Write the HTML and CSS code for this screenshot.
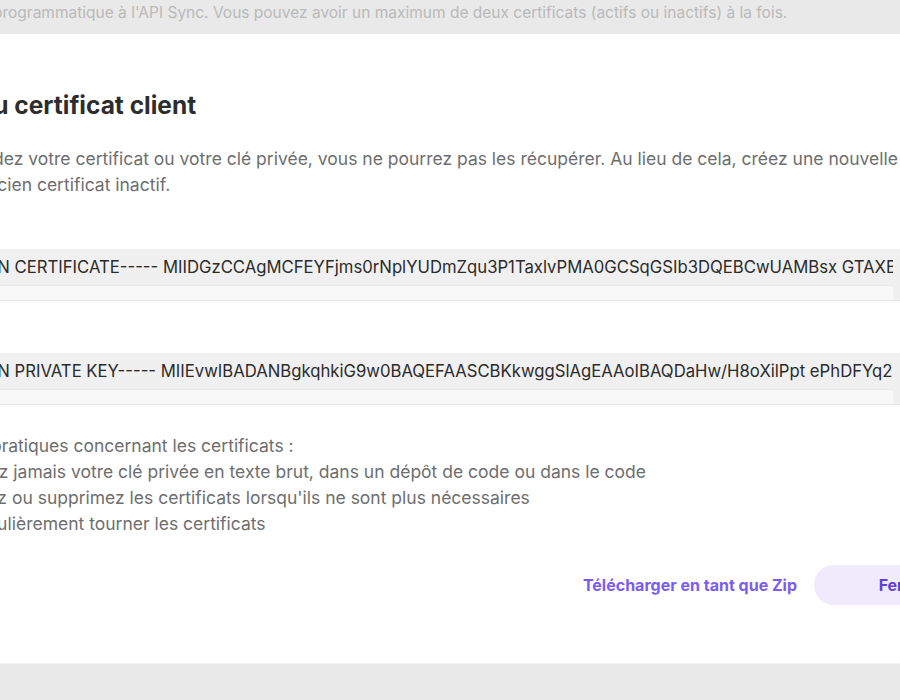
FILE: index.html
```html
<!DOCTYPE html>
<html lang="fr">
<head>
	<meta charset="utf-8">
	<title>Certificats clients</title>
	<link rel="stylesheet" href="styles.css">
</head>
<body>
	<div class="page-intro">
		<p>Les certificats clients permettent un accès programmatique à l'API Sync. Vous pouvez avoir un maximum de deux certificats (actifs ou inactifs) à la fois.</p>
	</div>

	<div class="modal">
		<div class="modal-body">
			<h2 class="modal-title">Nouveau certificat client</h2>
			<p class="notice">Si vous perdez votre certificat ou votre clé privée, vous ne pourrez pas les récupérer. Au lieu de cela, créez une nouvelle paire et<br>effacez l'ancien certificat inactif.</p>

			<div class="field-group">
				<label class="field-label">Certificat</label>
				<div class="cert-field">
					<div class="cert-text">-----BEGIN CERTIFICATE----- MIIDGzCCAgMCFEYFjms0rNplYUDmZqu3P1TaxlvPMA0GCSqGSIb3DQEBCwUAMBsx GTAXBgNVBAMMEHN5bmMtY2xpZW50LWNlcnQwHhcN</div>
					<div class="h-track"></div>
				</div>
			</div>

			<div class="field-group">
				<label class="field-label">Clé privée</label>
				<div class="cert-field">
					<div class="cert-text">-----BEGIN PRIVATE KEY----- MIIEvwIBADANBgkqhkiG9w0BAQEFAASCBKkwggSlAgEAAoIBAQDaHw/H8oXilPpt ePhDFYq2nGk8</div>
					<div class="h-track"></div>
				</div>
			</div>

			<div class="tips">
				<p>Meilleures pratiques concernant les certificats :</p>
				<ul>
					<li>Ne stockez jamais votre clé privée en texte brut, dans un dépôt de code ou dans le code</li>
					<li>Désactivez ou supprimez les certificats lorsqu'ils ne sont plus nécessaires</li>
					<li>Faites régulièrement tourner les certificats</li>
				</ul>
			</div>
		</div>

		<div class="modal-footer">
			<a href="#" class="btn-link">Télécharger en tant que Zip</a>
			<button class="btn-close">Fermer</button>
		</div>
	</div>
</body>
</html>
```

FILE: styles.css
```css
body {
	background-color: #e8e9e8;
	color: #6e6e6e;
	font-family: Inter, "Liberation Sans", sans-serif;
	margin: 0;
	padding: 0;
	overflow: hidden;
}
/* dimmed page text behind the dialog */
.page-intro {
	height: 34px;
	overflow: hidden;
	white-space: nowrap;
}
.page-intro p {
	margin: 0 0 0 -322px;
	font-size: 15.5px;
	line-height: 26px;
	color: #bababa;
}
.modal {
	background-color: #fff;
	width: 1178px;
	margin-left: -139px;
	padding: 55px 40px 58px;
	box-sizing: border-box;
	border-bottom: 1px solid #f3f3f3;
}
.modal-title {
	font-size: 24.5px;
	line-height: 32px;
	font-weight: 700;
	color: #2d2d2d;
	margin: 0 0 25px;
}
.notice {
	font-size: 17.5px;
	line-height: 26px;
	margin: 0;
}
.field-group {
	margin-top: 19px;
}
.field-group + .field-group {
	margin-top: 20px;
}
.field-label {
	display: block;
	font-size: 17.5px;
	line-height: 24px;
	margin-bottom: 8px;
}
.cert-field {
	display: grid;
	grid-template-columns: 1fr 15px;
	max-width: 1007px;
	background-color: #f0f0f0;
	border-bottom: 1px solid #e6e6e6;
}
.cert-text {
	padding-left: 20px;
	height: 36px;
	line-height: 36px;
	font-size: 16.7px;
	color: #2b2b2b;
	white-space: nowrap;
	overflow: hidden;
}
.h-track {
	grid-column: 1;
	height: 15px;
	background-color: #f8f8f8;
	border-top: 1px solid #e9e9e9;
	box-sizing: border-box;
}
.tips {
	margin-top: 28px;
	font-size: 17.5px;
	line-height: 26px;
}
.tips p {
	margin: 0;
}
.tips ul {
	margin: 0;
	padding-left: 15px;
}
.modal-footer {
	display: flex;
	justify-content: flex-end;
	align-items: center;
	gap: 17px;
	margin-top: 28px;
}
.btn-link {
	font-size: 16px;
	font-weight: 700;
	color: #7b5cf2;
	text-decoration: none;
}
.btn-close {
	min-width: 185px;
	height: 40px;
	border: none;
	border-radius: 20px;
	background-color: #efebfd;
	color: #5f40d8;
	font-family: inherit;
	font-size: 16px;
	font-weight: 700;
}
```
